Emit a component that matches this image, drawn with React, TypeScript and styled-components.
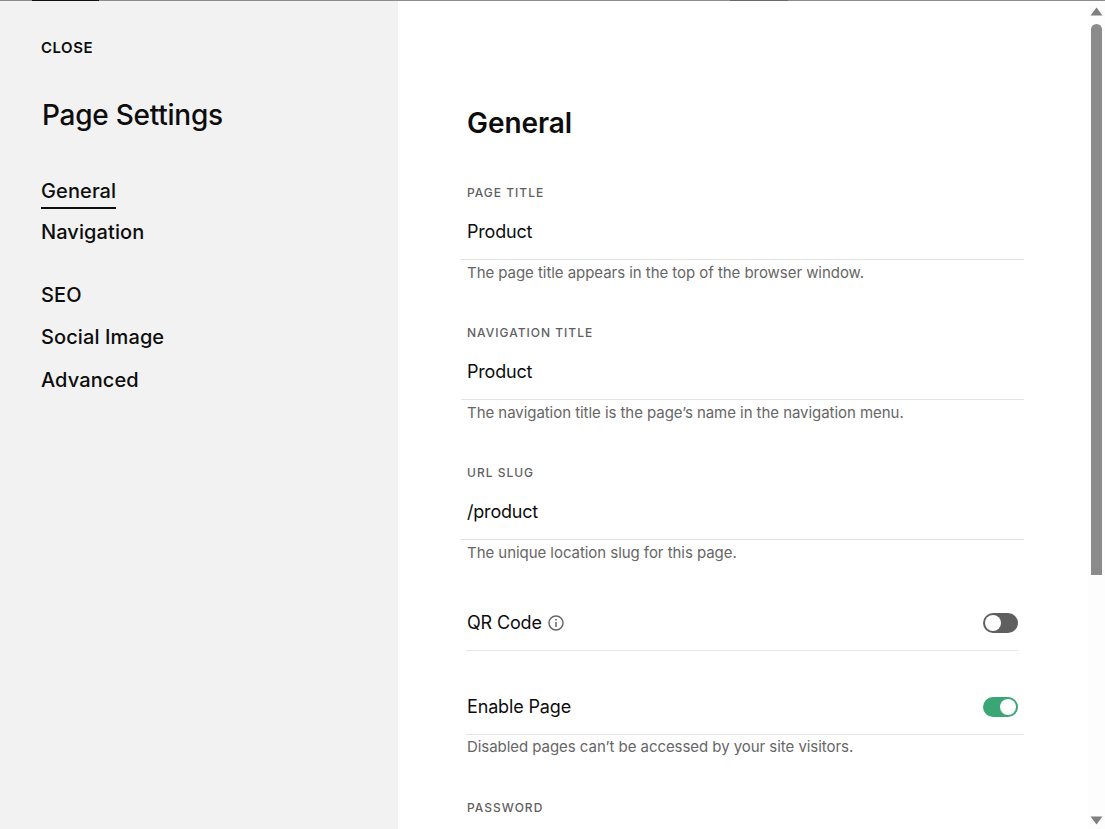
import React from "react";
import styled, { createGlobalStyle } from "styled-components";

const GlobalStyle = createGlobalStyle`
    html, body {
        margin: 0;
        padding: 0;
        height: 100%;
        overflow: hidden;
        background: #fff;
    }
    body {
        font-family: Inter, "Liberation Sans", sans-serif;
        color: #0d0d0d;
    }
`;

const StyledPage = styled.div`
    display: flex;
    flex-direction: column;
    width: 1105px;
    height: 829px;
    overflow: hidden;
`;

const StyledTopLine = styled.div`
    display: flex;
    flex: none;
    height: 1px;
    padding-left: 32px;
    background: #8d8d8d;
`;

const StyledTopTab = styled.div`
    width: 67px;
    background: #111;
`;

const StyledTopSmudge = styled.div`
    width: 58px;
    margin-left: 631px;
    background: #6a6a6a;
`;

const StyledBody = styled.div`
    display: flex;
    flex: 1;
    min-height: 0;
`;

const StyledSidebar = styled.aside`
    display: flex;
    flex-direction: column;
    flex: none;
    box-sizing: border-box;
    width: 398px;
    padding: 39px 0 0 41px;
    background: #f2f2f2;
`;

const StyledClose = styled.div`
    font-size: 15px;
    line-height: 16px;
    font-weight: 600;
    letter-spacing: 0.5px;
`;

const StyledSideTitle = styled.h1`
    margin: 39px 0 0 1px;
    font-size: 28px;
    line-height: 40px;
    font-weight: 500;
    letter-spacing: -0.25px;
`;

const StyledNavGroup = styled.nav`
    display: flex;
    flex-direction: column;
    align-items: flex-start;
    margin-top: ${(props: { $top: number }) => props.$top}px;
`;

const StyledNavItem = styled.div<{ $active?: boolean }>`
    height: ${(props) => (props.$active ? "31px" : "42.5px")};
    margin-bottom: ${(props) => (props.$active ? "10px" : "0")};
    box-sizing: border-box;
    font-size: 20px;
    line-height: 26px;
    font-weight: 500;
    letter-spacing: 0.1px;
    border-bottom: ${(props) => (props.$active ? "2px solid #0d0d0d" : "none")};
`;

const StyledMain = styled.main`
    flex: 1;
    min-width: 0;
    box-sizing: border-box;
    padding: 102px 0 0 63px;
    overflow: hidden;
`;

const StyledHeading = styled.h2`
    margin: 0 0 42px 6px;
    font-size: 28px;
    line-height: 40px;
    font-weight: 600;
    letter-spacing: -0.05px;
`;

const StyledFieldList = styled.div`
    display: flex;
    flex-direction: column;
    gap: 10px;
`;

const StyledField = styled.section`
    width: 563px;
    height: 130px;
`;

const StyledLabel = styled.div`
    padding-left: 6px;
    font-size: 12px;
    line-height: 16px;
    font-weight: 500;
    letter-spacing: 1px;
    color: #5f5f5f;
`;

const StyledValue = styled.div`
    box-sizing: border-box;
    height: 51px;
    margin-top: 8px;
    padding: 10px 0 0 6px;
    font-size: 18px;
    line-height: 26px;
    letter-spacing: -0.2px;
    color: #0d0d0d;
    border-bottom: 1px solid #e3e3e3;
`;

const StyledHelp = styled.div<{ $tight?: boolean }>`
    margin-top: ${(props) => (props.$tight ? "2px" : "3px")};
    padding-left: 6px;
    font-size: 15px;
    line-height: 20px;
    letter-spacing: -0.05px;
    color: #666;
`;

const StyledToggleRow = styled.div<{ $wide?: boolean }>`
    display: flex;
    align-items: center;
    justify-content: space-between;
    box-sizing: border-box;
    width: ${(props) => (props.$wide ? "558px" : "552px")};
    height: 56px;
    margin-left: 5px;
    padding-left: 1px;
    padding-right: ${(props) => (props.$wide ? "6px" : "0")};
    border-bottom: 1px solid #e6e6e6;
`;

const StyledToggleLabel = styled.div`
    display: flex;
    align-items: center;
    gap: 6px;
    font-size: 18px;
    line-height: 26px;
    letter-spacing: -0.15px;
`;

const StyledToggle = styled.div<{ $on?: boolean }>`
    display: flex;
    align-items: center;
    justify-content: ${(props) => (props.$on ? "flex-end" : "flex-start")};
    box-sizing: border-box;
    width: 35px;
    height: 20px;
    padding: 2px;
    border-radius: 10px;
    background: ${(props) => (props.$on ? "#3aa676" : "#5f5f5f")};
`;

const StyledKnob = styled.div`
    width: 16px;
    height: 16px;
    border-radius: 50%;
    background: #fff;
`;

const StyledEnableBlock = styled.div`
    margin-top: 28px;
`;

const StyledPasswordLabel = styled(StyledLabel)`
    margin-top: 43px;
`;

const StyledScrollbar = styled.div`
    display: flex;
    flex-direction: column;
    align-items: center;
    flex: none;
    width: 17px;
    padding-top: 6px;
    box-sizing: border-box;
    background: #fdfdfd;
`;

const StyledThumb = styled.div`
    flex: none;
    width: 11px;
    height: 551px;
    margin-top: 8px;
    border-radius: 6px 6px 0 0;
    background: #8b8b8b;
`;

const StyledArrow = styled.svg`
    display: block;
    flex: none;
`;

const StyledDownArrow = styled(StyledArrow)`
    margin-top: auto;
    margin-bottom: 4px;
`;

const InfoIcon = () => (
    <svg width="16" height="16" viewBox="0 0 16 16" fill="none" stroke="#666" strokeWidth="1.5">
        <circle cx="8" cy="8" r="7" />
        <path d="M8 7v5" />
        <path d="M8 4v1.6" />
    </svg>
);

const App = () => {
    return (
        <StyledPage>
            <GlobalStyle />
            <StyledTopLine>
                <StyledTopTab />
                <StyledTopSmudge />
            </StyledTopLine>
            <StyledBody>
                <StyledSidebar>
                    <StyledClose>CLOSE</StyledClose>
                    <StyledSideTitle>Page Settings</StyledSideTitle>
                    <StyledNavGroup $top={43}>
                        <StyledNavItem $active>General</StyledNavItem>
                        <StyledNavItem>Navigation</StyledNavItem>
                    </StyledNavGroup>
                    <StyledNavGroup $top={20}>
                        <StyledNavItem>SEO</StyledNavItem>
                        <StyledNavItem>Social Image</StyledNavItem>
                        <StyledNavItem>Advanced</StyledNavItem>
                    </StyledNavGroup>
                </StyledSidebar>
                <StyledMain>
                    <StyledHeading>General</StyledHeading>
                    <StyledFieldList>
                        <StyledField>
                            <StyledLabel>PAGE TITLE</StyledLabel>
                            <StyledValue>Product</StyledValue>
                            <StyledHelp>The page title appears in the top of the browser window.</StyledHelp>
                        </StyledField>
                        <StyledField>
                            <StyledLabel>NAVIGATION TITLE</StyledLabel>
                            <StyledValue>Product</StyledValue>
                            <StyledHelp>The navigation title is the page’s name in the navigation menu.</StyledHelp>
                        </StyledField>
                        <StyledField>
                            <StyledLabel>URL SLUG</StyledLabel>
                            <StyledValue>/product</StyledValue>
                            <StyledHelp>The unique location slug for this page.</StyledHelp>
                        </StyledField>
                    </StyledFieldList>
                    <StyledToggleRow>
                        <StyledToggleLabel>
                            QR Code <InfoIcon />
                        </StyledToggleLabel>
                        <StyledToggle>
                            <StyledKnob />
                        </StyledToggle>
                    </StyledToggleRow>
                    <StyledEnableBlock>
                        <StyledToggleRow $wide>
                            <StyledToggleLabel>Enable Page</StyledToggleLabel>
                            <StyledToggle $on>
                                <StyledKnob />
                            </StyledToggle>
                        </StyledToggleRow>
                        <StyledHelp $tight>Disabled pages can’t be accessed by your site visitors.</StyledHelp>
                    </StyledEnableBlock>
                    <StyledPasswordLabel>PASSWORD</StyledPasswordLabel>
                </StyledMain>
                <StyledScrollbar>
                    <StyledArrow width="13" height="9" viewBox="0 0 13 9">
                        <path d="M6.5 0.5L12.5 8.5H0.5Z" fill="#7f7f7f" />
                    </StyledArrow>
                    <StyledThumb />
                    <StyledDownArrow width="13" height="9" viewBox="0 0 13 9">
                        <path d="M0.5 0.5H12.5L6.5 8.5Z" fill="#7f7f7f" />
                    </StyledDownArrow>
                </StyledScrollbar>
            </StyledBody>
        </StyledPage>
    );
};

export default App;
